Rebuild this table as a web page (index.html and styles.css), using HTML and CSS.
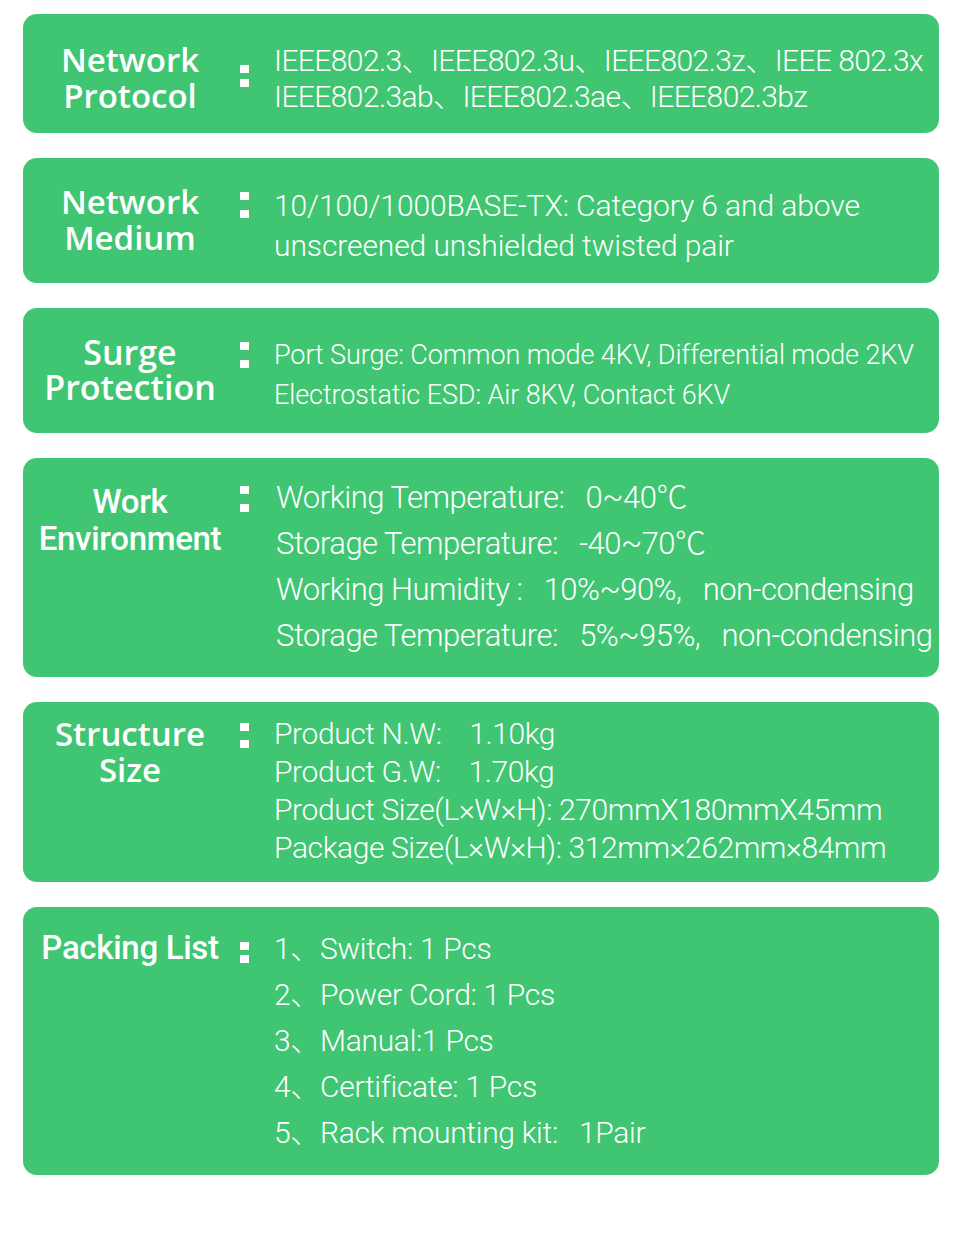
FILE: index.html
```html
<!DOCTYPE html>
<html lang="en">
<head>
<meta charset="utf-8">
<link rel="stylesheet" href="styles.css">
</head>
<body>
<div class="page">
  <div class="card c1">
    <div class="label open">Network<br>Protocol</div>
    <div class="colon"><i></i><i></i></div>
    <div class="value">IEEE802.3、IEEE802.3u、IEEE802.3z、IEEE 802.3x<br>IEEE802.3ab、IEEE802.3ae、IEEE802.3bz</div>
  </div>
  <div class="card c2">
    <div class="label open">Network<br>Medium</div>
    <div class="colon"><i></i><i></i></div>
    <div class="value">10/100/1000BASE-TX: Category 6 and above<br>unscreened unshielded twisted pair</div>
  </div>
  <div class="card c3">
    <div class="label open">Surge<br>Protection</div>
    <div class="colon"><i></i><i></i></div>
    <div class="value">Port Surge: Common mode 4KV, Differential mode 2KV<br>Electrostatic ESD: Air 8KV, Contact 6KV</div>
  </div>
  <div class="card c4">
    <div class="label harm">Work<br>Environment</div>
    <div class="colon"><i></i><i></i></div>
    <div class="value">Working Temperature:&nbsp;&nbsp; 0~40<span class="cjk">℃</span><br>Storage Temperature:&nbsp;&nbsp; -40~70<span class="cjk">℃</span><br>Working Humidity :&nbsp;&nbsp; 10%~90%,&nbsp;&nbsp; non-condensing<br>Storage Temperature:&nbsp;&nbsp; 5%~95%,&nbsp;&nbsp; non-condensing</div>
  </div>
  <div class="card c5">
    <div class="label open">Structure<br>Size</div>
    <div class="colon"><i></i><i></i></div>
    <div class="value">Product N.W:&nbsp;&nbsp;&nbsp; 1.10kg<br>Product G.W:&nbsp;&nbsp;&nbsp; 1.70kg<br>Product Size(L×W×H): 270mmX180mmX45mm<br>Package Size(L×W×H): 312mm×262mm×84mm</div>
  </div>
  <div class="card c6">
    <div class="label harm">Packing List</div>
    <div class="colon"><i></i><i></i></div>
    <div class="value">1、Switch: 1 Pcs<br>2、Power Cord: 1 Pcs<br>3、Manual:1 Pcs<br>4、Certificate: 1 Pcs<br>5、Rack mounting kit:&nbsp;&nbsp; 1Pair</div>
  </div>
</div>
</body>
</html>
```

FILE: styles.css
```css
* { box-sizing: border-box; }
html, body { margin: 0; padding: 0; background: #ffffff; }
.page {
  width: 960px;
  padding: 14px 21px 0 23px;
  display: flex;
  flex-direction: column;
  gap: 25px;
}
.card {
  width: 916px;
  background: #40c673;
  border-radius: 14px;
  display: flex;
  align-items: flex-start;
  color: #ffffff;
  white-space: nowrap;
  overflow: hidden;
}
.label {
  flex: 0 0 214px;
  width: 214px;
  text-align: center;
  font-size: 33px;
  line-height: 36px;
}
.label.open {
  font-family: "Open Sans", "Noto Sans", sans-serif;
  font-weight: 600;
}
.label.harm {
  font-family: Roboto, "Noto Sans", sans-serif;
  font-weight: 500;
  letter-spacing: -0.3px;
}
.colon {
  flex: 0 0 9px;
  margin-left: 3px;
  width: 9px;
  display: flex;
  flex-direction: column;
  gap: 10px;
}
.colon i {
  display: block;
  width: 9px;
  height: 8px;
  background: #ffffff;
}
.value {
  flex: 0 0 auto;
  margin-left: 25px;
  font-family: Roboto, "Noto Sans CJK SC", sans-serif;
  font-weight: 300;
  font-size: 30px;
  letter-spacing: -0.3px;
}
.cjk {
  font-family: "Noto Sans CJK SC", sans-serif;
  font-weight: 300;
  line-height: 0;
  letter-spacing: -2px;
}
.c1 { height: 119px; }
.c1 .label { padding-top: 28px; }
.c1 .colon { margin-top: 51px; gap: 6px; }
.c1 .value { padding-top: 29px; line-height: 36px; letter-spacing: -0.6px; }

.c2 { height: 125px; }
.c2 .label { padding-top: 26px; }
.c2 .colon { margin-top: 34px; }
.c2 .value { padding-top: 28px; line-height: 40px; letter-spacing: -0.1px; }

.c3 { height: 125px; }
.c3 .label { padding-top: 27px; line-height: 35px; font-size: 34px; }
.c3 .colon { margin-top: 34px; }
.c3 .value { padding-top: 27px; line-height: 40px; font-size: 27px; letter-spacing: -0.1px; }

.c4 { height: 219px; }
.c4 .label { padding-top: 25px; line-height: 37px; }
.c4 .colon { margin-top: 28px; }
.c4 .value { padding-top: 17px; line-height: 46px; font-size: 31px; margin-left: 27px; letter-spacing: -0.5px; }

.c5 { height: 180px; }
.c5 .label { padding-top: 14px; }
.c5 .colon { margin-top: 21px; gap: 9px; }
.c5 .value { padding-top: 13px; line-height: 38px; letter-spacing: -0.4px; }

.c6 { height: 268px; }
.c6 .label { padding-top: 23px; }
.c6 .colon { margin-top: 35px; gap: 5px; }
.c6 .value { padding-top: 19px; line-height: 46px; }
```
